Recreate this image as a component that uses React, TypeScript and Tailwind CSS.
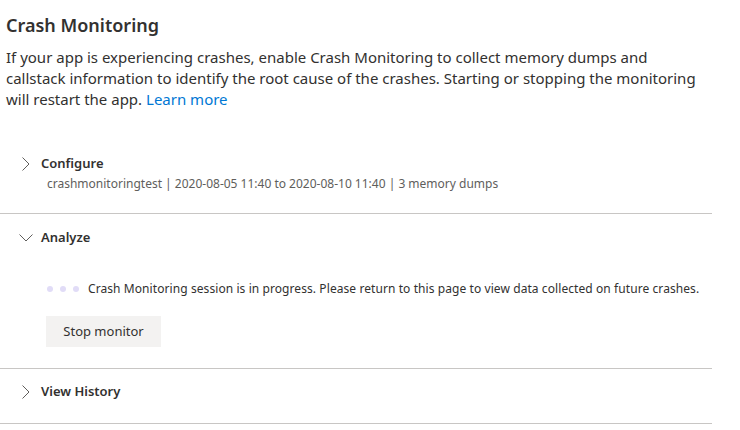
import React from 'react';

const ChevronRight = () => (
    <svg width="16" height="16" viewBox="0 0 16 16" className="shrink-0">
        <path d="M4.5 1.5 L11 8 L4.5 14.5" fill="none" stroke="#605e5c" strokeWidth="1" />
    </svg>
);

const ChevronDown = () => (
    <svg width="16" height="16" viewBox="0 0 16 16" className="shrink-0">
        <path d="M1.5 4.5 L8 11 L14.5 4.5" fill="none" stroke="#605e5c" strokeWidth="1" />
    </svg>
);

const SectionHeader: React.FC<{ title: string; open?: boolean }> = ({ title, open }) => (
    <div className="flex items-center h-5">
        <div className="w-[23px] flex justify-start">{open ? <ChevronDown /> : <ChevronRight />}</div>
        <span className="text-[13px] font-semibold text-[#323130]">{title}</span>
    </div>
);

const App: React.FC = () => {
    return (
        <div className="w-[740px] h-[430px] bg-white overflow-hidden font-['Segoe_UI','Noto_Sans',sans-serif] text-[#323130]">
            <div className="pl-[6px] pt-[13px]">
                <h1 className="text-[18px] leading-6 font-semibold">Crash Monitoring</h1>
                <p className="mt-[10px] text-[15px] leading-[21px] w-[695px]">
                    If your app is experiencing crashes, enable Crash Monitoring to collect memory dumps and callstack information to identify the root cause of the crashes. Starting or stopping the monitoring will restart the app. <a className="text-[#0078d4]">Learn more</a>
                </p>
            </div>

            <div className="mt-[30px] w-[712px]">
                <div className="pl-[18px] pt-[14px] pb-[19px] border-b border-[#c8c6c4]">
                    <SectionHeader title="Configure" />
                    <div className="pl-[29px] text-[12px] leading-5 text-[#605e5c]">
                        crashmonitoringtest | 2020-08-05 11:40 to 2020-08-10 11:40 | 3 memory dumps
                    </div>
                </div>

                <div className="pl-[18px] pt-[14px] pb-[21px] border-b border-[#c8c6c4]">
                    <SectionHeader title="Analyze" open />
                    <div className="pl-[29px] mt-[31px] flex items-center gap-[9px] h-5">
                        <div className="flex gap-[7px]">
                            <span className="w-[6px] h-[6px] rounded-full bg-[#e1dcf7]" />
                            <span className="w-[6px] h-[6px] rounded-full bg-[#e1dcf7]" />
                            <span className="w-[6px] h-[6px] rounded-full bg-[#e1dcf7]" />
                        </div>
                        <span className="text-[12px] tracking-[0.08px] text-[#323130]">
                            Crash Monitoring session is in progress. Please return to this page to view data collected on future crashes.
                        </span>
                    </div>
                    <button className="ml-[28px] mt-[17px] h-[31px] w-[115px] bg-[#f3f2f1] text-[13px] text-[#323130]">
                        Stop monitor
                    </button>
                </div>

                <div className="pl-[18px] pt-[13px] pb-[21px] border-b border-[#c8c6c4]">
                    <SectionHeader title="View History" />
                </div>
            </div>
        </div>
    );
};

export default App;
